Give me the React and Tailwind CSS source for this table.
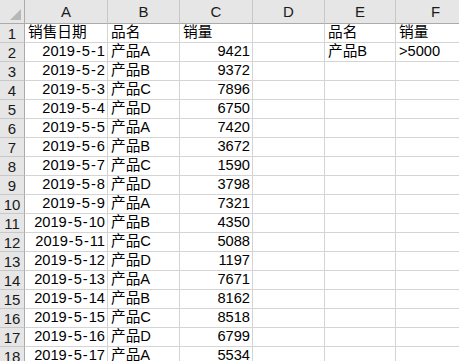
const rows = [
  ['销售日期', '品名', '销量', '', '品名', '销量'],
  ['2019-5-1', '产品A', '9421', '', '产品B', '>5000'],
  ['2019-5-2', '产品B', '9372'],
  ['2019-5-3', '产品C', '7896'],
  ['2019-5-4', '产品D', '6750'],
  ['2019-5-5', '产品A', '7420'],
  ['2019-5-6', '产品B', '3672'],
  ['2019-5-7', '产品C', '1590'],
  ['2019-5-8', '产品D', '3798'],
  ['2019-5-9', '产品A', '7321'],
  ['2019-5-10', '产品B', '4350'],
  ['2019-5-11', '产品C', '5088'],
  ['2019-5-12', '产品D', '1197'],
  ['2019-5-13', '产品A', '7671'],
  ['2019-5-14', '产品B', '8162'],
  ['2019-5-15', '产品C', '8518'],
  ['2019-5-16', '产品D', '6799'],
  ['2019-5-17', '产品A', '5534'],
];

const cols = ['A', 'B', 'C', 'D', 'E', 'F'];

// excel's date hyphen is a bit wider than arial's
const DateText = ({ value }) => {
  const parts = value.split('-');
  return (
    <span>
      {parts.map((p, i) => (
        <span key={i}>
          {i > 0 && <span className="mx-[1px]">-</span>}
          {p}
        </span>
      ))}
    </span>
  );
};

const Cell = ({ value, row, col }) => {
  const isNumber = /^\d+$/.test(value);
  const isDate = row > 0 && col === 0;
  const right = isNumber || isDate;
  return (
    <div
      className={`flex items-end pb-[1px] border-r border-b border-[#d4d4d4] whitespace-nowrap ${
        right ? 'justify-end pr-[2px]' : 'justify-start pl-[3px]'
      }`}
    >
      {isDate ? <DateText value={value} /> : value}
    </div>
  );
};

export default function App() {
  return (
    <div
      className="w-[459px] h-[361px] overflow-hidden bg-white text-black text-[14.67px] leading-[17px]"
      style={{ fontFamily: '"Liberation Sans", "Noto Sans CJK SC", sans-serif' }}
    >
      <div className="grid grid-cols-[25px_83px_72px_73px_72px_71px_80px] grid-rows-[24px] auto-rows-[19px]">
        {/* corner */}
        <div className="relative bg-[#e6e6e6] border-r border-b border-[#ababab]">
          <div className="absolute right-[3px] bottom-[3px] w-0 h-0 border-l-[11px] border-l-transparent border-b-[11px] border-b-[#b7b7b7]" />
        </div>
        {cols.map((c) => (
          <div
            key={c}
            className="flex items-center justify-center bg-[#e6e6e6] border-r border-r-[#c8c8c8] border-b border-b-[#ababab] text-[#1a1a1a] text-[15px]"
          >
            {c}
          </div>
        ))}

        {rows.map((r, ri) => (
          <div key={ri} className="contents">
            <div className="flex items-center justify-center bg-[#e6e6e6] border-r border-r-[#ababab] border-b border-b-[#c8c8c8] text-[#1a1a1a] text-[15px]">
              {ri + 1}
            </div>
            {cols.map((_, ci) => (
              <Cell key={ci} value={r[ci] || ''} row={ri} col={ci} />
            ))}
          </div>
        ))}
      </div>
    </div>
  );
}
